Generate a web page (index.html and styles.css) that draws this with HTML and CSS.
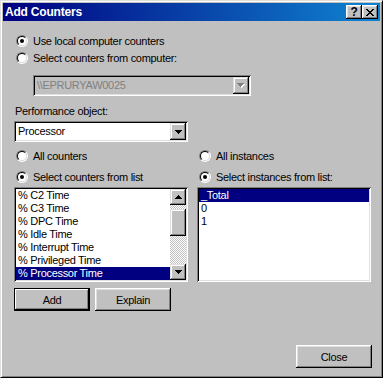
FILE: index.html
```html
<!DOCTYPE html>
<html lang="en">
<head>
    <meta charset="UTF-8">
    <title>Add Counters</title>
    <link rel="stylesheet" href="styles.css">
</head>
<body>
    <div class="window">
        <div class="titlebar">
            <span class="title">Add Counters</span>
            <span class="tb-btns">
                <span class="tb-btn">?</span>
                <span class="tb-btn">
                    <svg width="8" height="7" viewBox="0 0 8 7" shape-rendering="crispEdges"><path d="M0 0h2v1h-2zM6 0h2v1h-2zM1 1h2v1h-2zM5 1h2v1h-2zM2 2h4v1h-4zM3 3h2v1h-2zM2 4h4v1h-4zM1 5h2v1h-2zM5 5h2v1h-2zM0 6h2v1h-2zM6 6h2v1h-2z" fill="#000"/></svg>
                </span>
            </span>
        </div>

        <div class="content">
            <div class="opt"><span class="radio"><span class="ring"><span class="dot"></span></span></span>Use local computer counters</div>
            <div class="opt"><span class="radio"><span class="ring"></span></span>Select counters from computer:</div>

            <div class="combo machine disabled">
                <span class="combo-text">\\EPRURYAW0025</span>
                <span class="drop">
                    <svg width="8" height="5" viewBox="0 0 8 5" shape-rendering="crispEdges"><path d="M1 1h7v1h-7zM2 2h5v1h-5zM3 3h3v1h-3zM4 4h1v1h-1z" fill="#fff"/><path d="M0 0h7v1h-7zM1 1h5v1h-5zM2 2h3v1h-3zM3 3h1v1h-1z" fill="#808080"/></svg>
                </span>
            </div>

            <div class="label">Performance object:</div>
            <div class="combo object">
                <span class="combo-text">Processor</span>
                <span class="drop">
                    <svg width="7" height="4" viewBox="0 0 7 4" shape-rendering="crispEdges"><path d="M0 0h7v1h-7zM1 1h5v1h-5zM2 2h3v1h-3zM3 3h1v1h-1z" fill="#000"/></svg>
                </span>
            </div>

            <div class="cols">
                <div class="col">
                    <div class="opt first"><span class="radio"><span class="ring"></span></span>All counters</div>
                    <div class="opt second"><span class="radio"><span class="ring"><span class="dot"></span></span></span>Select counters from list</div>
                    <div class="list">
                        <div class="items">
                            <div class="item">% C2 Time</div>
                            <div class="item">% C3 Time</div>
                            <div class="item">% DPC Time</div>
                            <div class="item">% Idle Time</div>
                            <div class="item">% Interrupt Time</div>
                            <div class="item">% Privileged Time</div>
                            <div class="item selected">% Processor Time</div>
                        </div>
                        <div class="scrollbar">
                            <span class="sb-btn">
                                <svg width="7" height="4" viewBox="0 0 7 4" shape-rendering="crispEdges"><path d="M3 0h1v1h-1zM2 1h3v1h-3zM1 2h5v1h-5zM0 3h7v1h-7z" fill="#000"/></svg>
                            </span>
                            <span class="track top"></span>
                            <span class="thumb"></span>
                            <span class="track"></span>
                            <span class="sb-btn">
                                <svg width="7" height="4" viewBox="0 0 7 4" shape-rendering="crispEdges"><path d="M0 0h7v1h-7zM1 1h5v1h-5zM2 2h3v1h-3zM3 3h1v1h-1z" fill="#000"/></svg>
                            </span>
                        </div>
                    </div>
                    <div class="btn-row">
                        <span class="btn default">Add</span>
                        <span class="btn">Explain</span>
                    </div>
                </div>

                <div class="col">
                    <div class="opt first"><span class="radio"><span class="ring"></span></span>All instances</div>
                    <div class="opt second"><span class="radio"><span class="ring"><span class="dot"></span></span></span>Select instances from list:</div>
                    <div class="list">
                        <div class="items">
                            <div class="item selected">_Total</div>
                            <div class="item">0</div>
                            <div class="item">1</div>
                        </div>
                    </div>
                </div>
            </div>

            <div class="footer">
                <span class="btn">Close</span>
            </div>
        </div>
    </div>
</body>
</html>
```

FILE: styles.css
```css
body {
    margin: 0;
    padding: 0;
    background-color: #ffffff;
    font-family: 'Liberation Sans', Arial, sans-serif;
    font-size: 11px;
    letter-spacing: -0.3px;
    color: #000;
}
.window {
    box-sizing: border-box;
    width: 383px;
    height: 378px;
    padding: 2px;
    background-color: #c0c0c0;
    border: 1px solid;
    border-color: #dfdfdf #000 #000 #dfdfdf;
    box-shadow: inset 1px 1px #fff, inset -1px -1px #808080;
}
.titlebar {
    height: 18px;
    display: flex;
    align-items: center;
    justify-content: space-between;
    padding: 0 2px;
    background: linear-gradient(to right, #000080, #1084d0);
}
.title {
    color: #fff;
    font-weight: bold;
    font-size: 12px;
    letter-spacing: -0.2px;
}
.tb-btns {
    display: flex;
}
.tb-btn {
    box-sizing: border-box;
    width: 16px;
    height: 14px;
    display: flex;
    align-items: center;
    justify-content: center;
    background-color: #c0c0c0;
    font-weight: bold;
    font-size: 12px;
    box-shadow: inset -1px -1px #000, inset 1px 1px #fff, inset -2px -2px #808080, inset 2px 2px #dfdfdf;
}
.content {
    padding: 11px 8px 0 11px;
}
.opt {
    height: 17px;
    display: flex;
    align-items: center;
    padding-left: 2px;
}
.radio {
    box-sizing: border-box;
    width: 12px;
    height: 12px;
    margin-right: 5px;
    border-radius: 50%;
    border: 1px solid;
    border-color: #808080 #fff #fff #808080;
    display: flex;
}
.ring {
    box-sizing: border-box;
    width: 10px;
    height: 10px;
    border-radius: 50%;
    border: 1px solid;
    border-color: #000 #dfdfdf #dfdfdf #000;
    background-color: #fff;
    display: flex;
    align-items: center;
    justify-content: center;
}
.dot {
    width: 4px;
    height: 4px;
    border-radius: 50%;
    background-color: #000;
}
.combo {
    box-sizing: border-box;
    height: 21px;
    padding: 2px;
    display: flex;
    background-color: #fff;
    box-shadow: inset 1px 1px #808080, inset -1px -1px #fff, inset 2px 2px #000, inset -2px -2px #dfdfdf;
}
.combo.machine {
    margin: 9px 0 0 19px;
    width: 218px;
}
.combo.object {
    margin-top: 3px;
    width: 174px;
}
.combo.disabled {
    background-color: #c0c0c0;
    color: #808080;
}
.combo-text {
    flex: 1;
    padding-left: 2px;
    line-height: 17px;
}
.drop, .sb-btn {
    box-sizing: border-box;
    width: 16px;
    display: flex;
    align-items: center;
    justify-content: center;
    background-color: #c0c0c0;
    box-shadow: inset -1px -1px #000, inset 1px 1px #dfdfdf, inset -2px -2px #808080, inset 2px 2px #fff;
}
.label {
    margin-top: 9px;
    line-height: 13px;
    padding-left: 1px;
}
.cols {
    display: flex;
    gap: 9px;
    margin-top: 5px;
}
.col {
    width: 174px;
}
.opt.second {
    margin-top: 4px;
}
.list {
    box-sizing: border-box;
    margin-top: 2px;
    height: 95px;
    padding: 2px;
    display: flex;
    background-color: #fff;
    box-shadow: inset 1px 1px #808080, inset -1px -1px #fff, inset 2px 2px #000, inset -2px -2px #dfdfdf;
}
.items {
    flex: 1;
}
.item {
    height: 13px;
    line-height: 13px;
    padding-left: 2px;
    white-space: nowrap;
}
.item.selected {
    background-color: #000080;
    color: #fff;
}
.scrollbar {
    width: 16px;
    display: flex;
    flex-direction: column;
}
.sb-btn {
    height: 16px;
}
.track {
    flex: 1;
    background-image: conic-gradient(#fff 25%, #c0c0c0 0 50%, #fff 0 75%, #c0c0c0 0);
    background-size: 2px 2px;
}
.track.top {
    flex: 0 0 4px;
}
.thumb {
    height: 27px;
    background-color: #c0c0c0;
    box-shadow: inset -1px -1px #000, inset 1px 1px #dfdfdf, inset -2px -2px #808080, inset 2px 2px #fff;
}
.btn-row {
    display: flex;
    gap: 5px;
    margin-top: 6px;
}
.btn {
    box-sizing: border-box;
    width: 76px;
    height: 23px;
    display: flex;
    align-items: center;
    justify-content: center;
    background-color: #c0c0c0;
    box-shadow: inset -1px -1px #000, inset 1px 1px #fff, inset -2px -2px #808080, inset 2px 2px #dfdfdf;
}
.btn.default {
    box-shadow: inset 0 0 0 1px #000, inset -2px -2px #000, inset 2px 2px #fff, inset -3px -3px #808080;
}
.footer {
    display: flex;
    justify-content: flex-end;
    margin-top: 34px;
}
```
